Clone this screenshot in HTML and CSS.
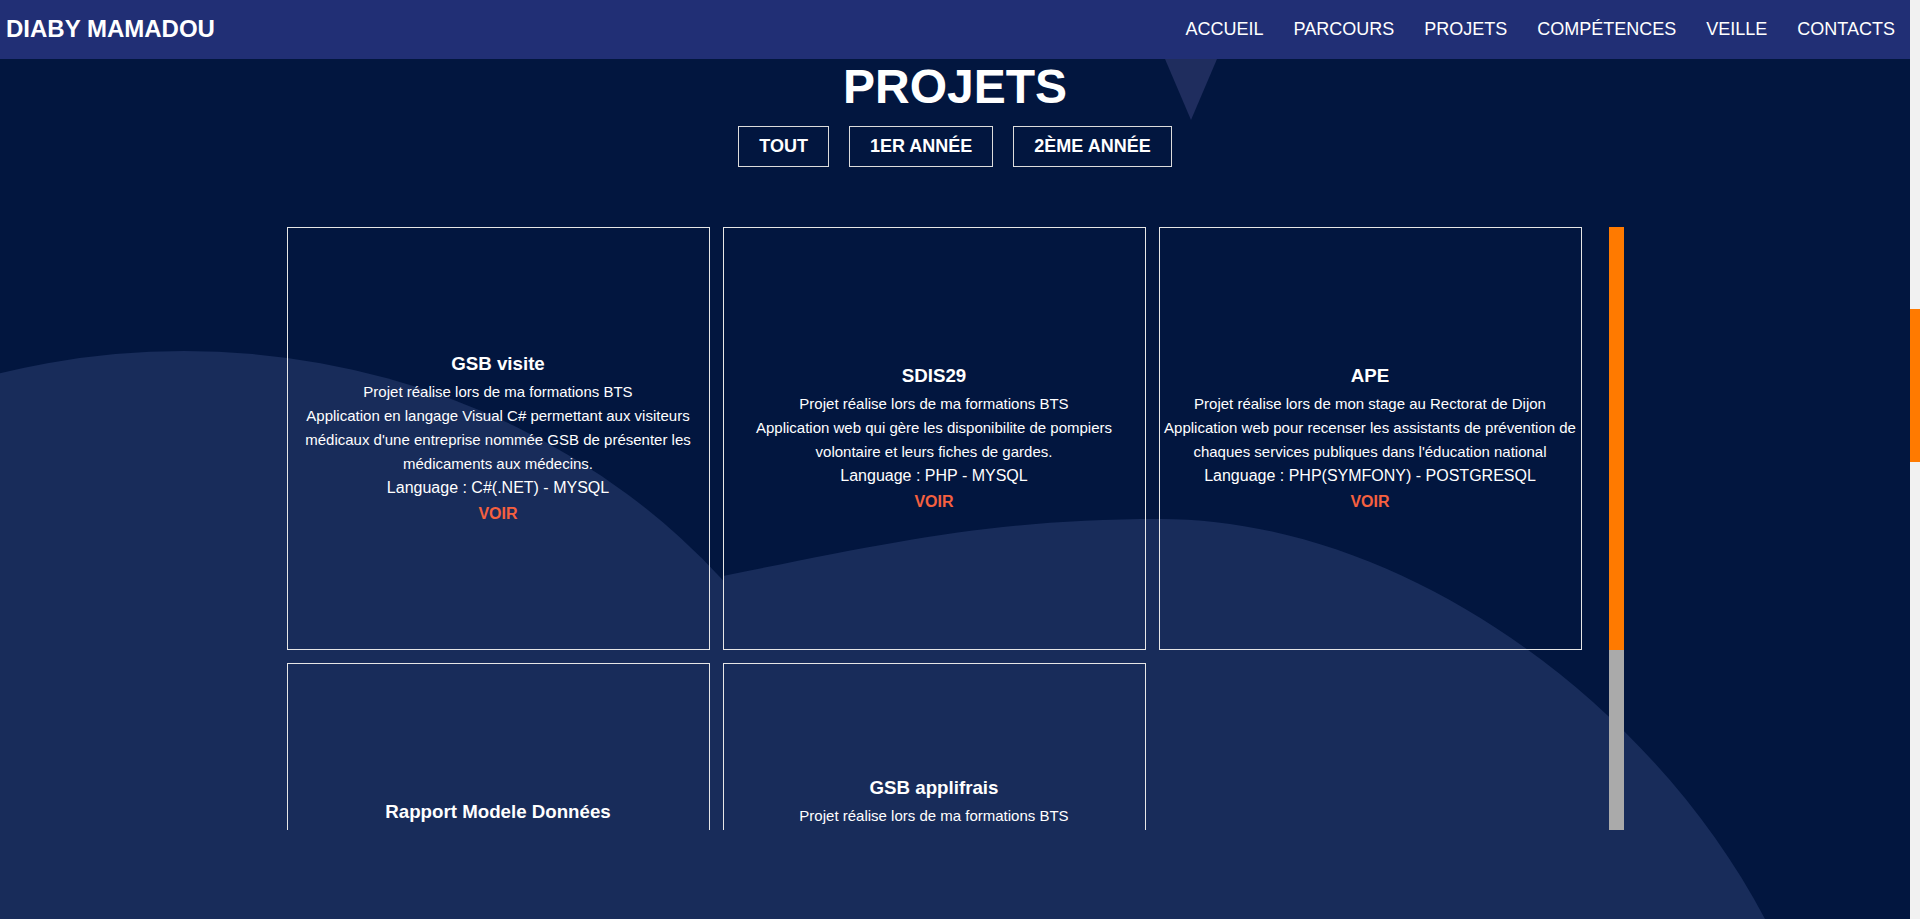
FILE: index.html
```html
<!DOCTYPE html>
<html lang="fr">
<head>
<meta charset="utf-8">
<title>Diaby Mamadou - Projets</title>
<link rel="stylesheet" href="styles.css">
</head>
<body>
<div class="page">
  <div class="main">
    <svg class="bg-blob" viewBox="0 0 1910 919" width="1910" height="919" aria-hidden="true">
      <ellipse cx="184" cy="984" rx="700" ry="633" fill="#182c5a"/>
      <path d="M723,576 C900,540 1000,519 1160,519 C1400,519 1650,700 1765,919 L723,919 Z" fill="#182c5a"/>
    </svg>
    <header class="topbar">
      <div class="logo">DIABY MAMADOU</div>
      <nav class="nav">
        <a href="#">ACCUEIL</a>
        <a href="#">PARCOURS</a>
        <a href="#">PROJETS</a>
        <a href="#">COMPÉTENCES</a>
        <a href="#">VEILLE</a>
        <a href="#">CONTACTS</a>
      </nav>
    </header>
    <div class="arrow"></div>
    <section class="projects">
      <h2 class="title">PROJETS</h2>
      <div class="filters">
        <button class="filter">TOUT</button>
        <button class="filter">1ER ANNÉE</button>
        <button class="filter">2ÈME ANNÉE</button>
      </div>
      <div class="cards-box">
        <div class="cards">
          <div class="card">
            <h3>GSB visite</h3>
            <p class="desc">Projet réalise lors de ma formations BTS<br>Application en langage Visual C# permettant aux visiteurs médicaux d'une entreprise nommée GSB de présenter les médicaments aux médecins.</p>
            <p class="lang">Language : C#(.NET) - MYSQL</p>
            <a class="voir" href="#">VOIR</a>
          </div>
          <div class="card">
            <h3>SDIS29</h3>
            <p class="desc">Projet réalise lors de ma formations BTS<br>Application web qui gère les disponibilite de pompiers volontaire et leurs fiches de gardes.</p>
            <p class="lang">Language : PHP - MYSQL</p>
            <a class="voir" href="#">VOIR</a>
          </div>
          <div class="card">
            <h3>APE</h3>
            <p class="desc">Projet réalise lors de mon stage au Rectorat de Dijon<br>Application web pour recenser les assistants de prévention de chaques services publiques dans l'éducation national</p>
            <p class="lang">Language : PHP(SYMFONY) - POSTGRESQL</p>
            <a class="voir" href="#">VOIR</a>
          </div>
          <div class="card">
            <h3>Rapport Modele Données</h3>
            <p class="desc">Projet réalise lors de ma formations BTS<br>Rapport sur la conception du modèle conceptuel de données d'une application de gestion.</p>
            <p class="lang">Language : SQL</p>
            <a class="voir" href="#">VOIR</a>
          </div>
          <div class="card">
            <h3>GSB applifrais</h3>
            <p class="desc">Projet réalise lors de ma formations BTS<br>Application web permettant aux visiteurs médicaux de l'entreprise GSB de saisir leurs fiches de frais et aux comptables de les valider et de suivre leur remboursement chaque mois.</p>
            <p class="lang">Language : PHP - MYSQL</p>
            <a class="voir" href="#">VOIR</a>
          </div>
        </div>
        <div class="cards-track"><div class="cards-thumb"></div></div>
      </div>
    </section>
  </div>
  <div class="page-track"><div class="page-thumb"></div></div>
</div>
</body>
</html>
```
FILE: styles.css
```css
* { box-sizing: border-box; }

html, body {
  margin: 0;
  padding: 0;
  height: 919px;
  overflow: hidden;
}

body {
  font-family: "Liberation Sans", Arial, sans-serif;
  color: #fff;
  background: #02163f;
}

.page {
  display: flex;
  width: 1920px;
  height: 919px;
}

.main {
  position: relative;
  flex: 1;
  height: 919px;
  background: #02163f;
  overflow: hidden;
}

.bg-blob {
  position: absolute;
  left: 0;
  top: 0;
  z-index: 0;
}

.topbar {
  position: relative;
  z-index: 2;
  height: 59px;
  background: #212f75;
  display: flex;
  align-items: center;
  justify-content: space-between;
  padding: 0 15px 0 6px;
}

.logo {
  font-size: 24px;
  font-weight: bold;
  color: #fff;
  padding-bottom: 1px;
}

.nav {
  display: flex;
  gap: 30px;
}

.nav a {
  color: #fff;
  text-decoration: none;
  font-size: 18px;
}

.arrow {
  position: absolute;
  z-index: 1;
  left: 1165px;
  top: 59px;
  width: 0;
  height: 0;
  border-left: 26px solid transparent;
  border-right: 26px solid transparent;
  border-top: 61px solid #1f2d5e;
}

.projects {
  position: relative;
  z-index: 1;
  display: flex;
  flex-direction: column;
  align-items: center;
}

.title {
  margin: 0;
  font-size: 48px;
  font-weight: bold;
  line-height: 55px;
}

.filters {
  display: flex;
  gap: 20px;
  margin-top: 12px;
}

.filter {
  font-family: "Liberation Sans", Arial, sans-serif;
  font-size: 18px;
  font-weight: bold;
  color: #fff;
  background: transparent;
  border: 1px solid #dcdcdc;
  padding: 9px 20px;
  line-height: 21px;
  cursor: pointer;
}

.cards-box {
  display: flex;
  width: 1337px;
  height: 603px;
  margin-top: 60px;
}

.cards {
  flex: 1;
  display: flex;
  flex-wrap: wrap;
  align-content: flex-start;
  gap: 13px;
  overflow: hidden;
}

.card {
  width: 423px;
  height: 423px;
  flex: none;
  border: 1px solid #e6e6e6;
  display: flex;
  flex-direction: column;
  justify-content: center;
  align-items: center;
  text-align: center;
  padding: 0 2px;
}

.card h3 {
  margin: 0 0 5px;
  font-size: 18.72px;
  font-weight: bold;
  line-height: 22px;
}

.card .desc {
  margin: 0;
  font-size: 15px;
  line-height: 24px;
}

.card .lang {
  margin: 0;
  font-size: 16px;
  line-height: 24px;
}

.card .voir {
  display: block;
  margin-top: 4px;
  font-size: 16px;
  font-weight: bold;
  line-height: 20px;
  color: #f5603f;
  text-decoration: none;
}

.cards-track {
  width: 15px;
  height: 603px;
  background: #aaaaaa;
  flex: none;
}

.cards-thumb {
  height: 423px;
  background: #ff7a00;
}

.page-track {
  width: 10px;
  height: 919px;
  background: #f1f1f1;
  padding-top: 309px;
}

.page-thumb {
  height: 153px;
  background: #ff7a00;
}
```
